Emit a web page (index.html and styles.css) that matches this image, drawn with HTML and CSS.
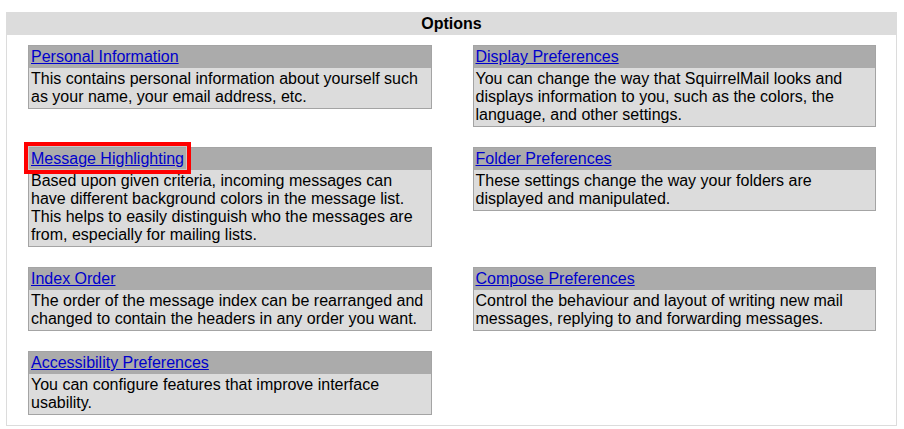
FILE: index.html
```html
<!DOCTYPE html>
<html>
<head>
<meta charset="utf-8">
<title>Options</title>
<link rel="stylesheet" href="styles.css">
</head>
<body>
<div class="options">
  <div class="options-title">Options</div>
  <div class="options-body">
    <div class="card">
      <div class="card-title"><a href="#">Personal Information</a></div>
      <div class="card-desc">This contains personal information about yourself such as your name, your email address, etc.</div>
    </div>
    <div class="card">
      <div class="card-title"><a href="#">Display Preferences</a></div>
      <div class="card-desc">You can change the way that SquirrelMail looks and displays information to you, such as the colors, the language, and other settings.</div>
    </div>
    <div class="card">
      <div class="card-title"><span class="hl"><a href="#">Message Highlighting</a></span></div>
      <div class="card-desc">Based upon given criteria, incoming messages can have different background colors in the message list. This helps to easily distinguish who the messages are from, especially for mailing lists.</div>
    </div>
    <div class="card">
      <div class="card-title"><a href="#">Folder Preferences</a></div>
      <div class="card-desc">These settings change the way your folders are displayed and manipulated.</div>
    </div>
    <div class="card">
      <div class="card-title"><a href="#">Index Order</a></div>
      <div class="card-desc">The order of the message index can be rearranged and changed to contain the headers in any order you want.</div>
    </div>
    <div class="card">
      <div class="card-title"><a href="#">Compose Preferences</a></div>
      <div class="card-desc">Control the behaviour and layout of writing new mail messages, replying to and forwarding messages.</div>
    </div>
    <div class="card">
      <div class="card-title"><a href="#">Accessibility Preferences</a></div>
      <div class="card-desc">You can configure features that improve interface usability.</div>
    </div>
  </div>
</div>
</body>
</html>
```
FILE: styles.css
```css
html, body {
  margin: 0;
  padding: 0;
  background: #ffffff;
}
body {
  font-family: "Liberation Sans", Arial, sans-serif;
  font-size: 16px;
  line-height: 18px;
  color: #000000;
}
.options {
  margin: 12px 7px 0 6px;
  background: #dcdcdc;
  padding: 1px;
}
.options-title {
  text-align: center;
  font-weight: bold;
  line-height: 22px;
  height: 22px;
}
.options-body {
  background: #ffffff;
  padding: 10px 20px 10px 21px;
  display: grid;
  grid-template-columns: 1fr 1fr;
  column-gap: 41px;
  row-gap: 20px;
  align-items: start;
}
.card {
  border: 1px solid #a4a4a4;
}
.card-title {
  background: #ababab;
  padding: 2px;
}
.card-title a {
  color: #0000cc;
  text-decoration: underline;
}
.card-desc {
  background: #dcdcdc;
  padding: 2px;
}
.hl {
  position: relative;
  display: inline-block;
}
.hl::after {
  content: "";
  position: absolute;
  top: -8px;
  left: -7px;
  right: -7px;
  bottom: -6px;
  border: 4px solid #ff0000;
  box-shadow: inset 0 0 0 1px #c8c8c8;
  pointer-events: none;
}
```
